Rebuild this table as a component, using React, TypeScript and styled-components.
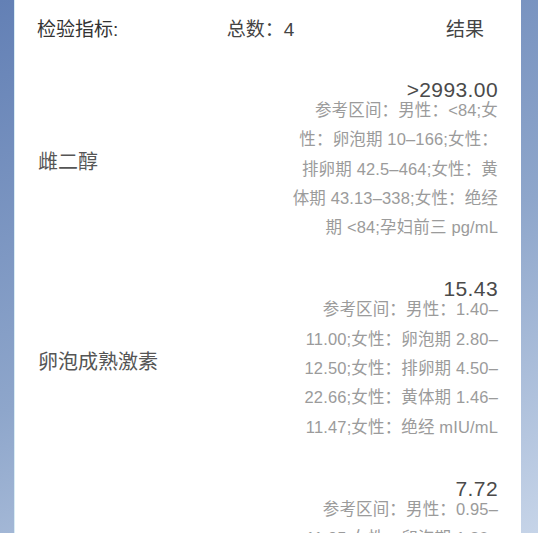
import React from "react";
import styled, { createGlobalStyle } from "styled-components";

const Global = createGlobalStyle`
  html, body { margin: 0; padding: 0; }
  body {
    width: 538px;
    height: 533px;
    overflow: hidden;
    background: linear-gradient(158deg, #6380b5 0%, #8ea6cb 55%, #c6d4e8 100%);
    font-family: "Liberation Sans", "Noto Sans CJK SC", sans-serif;
  }
`;

const Card = styled.div`
  margin-left: 14px;
  width: 507px;
  height: 533px;
  background: #ffffff;
  border-left: 1px solid #d9ecf4;
  box-sizing: border-box;
  overflow: hidden;
`;

const Header = styled.div`
  display: grid;
  grid-template-columns: 1fr auto 1fr;
  align-items: center;
  height: 54px;
  padding: 0 37px 0 22px;
  font-size: 19px;
  color: #333333;
`;

const HeadLeft = styled.div`
  justify-self: start;
`;

const HeadMid = styled.div`
  justify-self: center;
  color: #444;
`;

const HeadRight = styled.div`
  justify-self: end;
  color: #444;
`;

const List = styled.div`
  display: flex;
  flex-direction: column;
  gap: 36px;
  padding: 25px 23px 0 23px;
`;

const Row = styled.div`
  display: flex;
  align-items: center;
  justify-content: space-between;
`;

const Label = styled.div`
  font-size: 20px;
  color: #555555;
`;

const Result = styled.div`
  width: 215px;
  text-align: right;
  display: flex;
  flex-direction: column;
  align-items: flex-end;
`;

const Value = styled.div`
  font-size: 21px;
  line-height: 22px;
  color: #4a4a4a;
  letter-spacing: 0.4px;
`;

const Refs = styled.div`
  margin-top: -5px;
  font-size: 16.5px;
  letter-spacing: 0.15px;
  line-height: 29.3px;
  color: #9b9b9b;
  white-space: nowrap;
`;

const RefLine = styled.div``;

type Item = { name: string; value: string; lines: string[] };

const items: Item[] = [
  {
    name: "雌二醇",
    value: ">2993.00",
    lines: [
      "参考区间：男性：<84;女",
      "性：卵泡期 10–166;女性：",
      "排卵期 42.5–464;女性：黄",
      "体期 43.13–338;女性：绝经",
      "期 <84;孕妇前三 pg/mL",
    ],
  },
  {
    name: "卵泡成熟激素",
    value: "15.43",
    lines: [
      "参考区间：男性：1.40–",
      "11.00;女性：卵泡期 2.80–",
      "12.50;女性：排卵期 4.50–",
      "22.66;女性：黄体期 1.46–",
      "11.47;女性：绝经 mIU/mL",
    ],
  },
  {
    name: "黄体生成素",
    value: "7.72",
    lines: [
      "参考区间：男性：0.95–",
      "11.95;女性：卵泡期 1.80–",
      "11.78;女性：排卵期 7.59–",
      "89.08;女性：黄体期 0.56–",
      "14.00;女性：绝经 mIU/mL",
    ],
  },
];

export default function App() {
  return (
    <>
      <Global />
      <Card>
        <Header>
          <HeadLeft>检验指标:</HeadLeft>
          <HeadMid>总数：4</HeadMid>
          <HeadRight>结果</HeadRight>
        </Header>
        <List>
          {items.map((it) => (
            <Row key={it.name}>
              <Label>{it.name}</Label>
              <Result>
                <Value>{it.value}</Value>
                <Refs>
                  {it.lines.map((l) => (
                    <RefLine key={l}>{l}</RefLine>
                  ))}
                </Refs>
              </Result>
            </Row>
          ))}
        </List>
      </Card>
    </>
  );
}
